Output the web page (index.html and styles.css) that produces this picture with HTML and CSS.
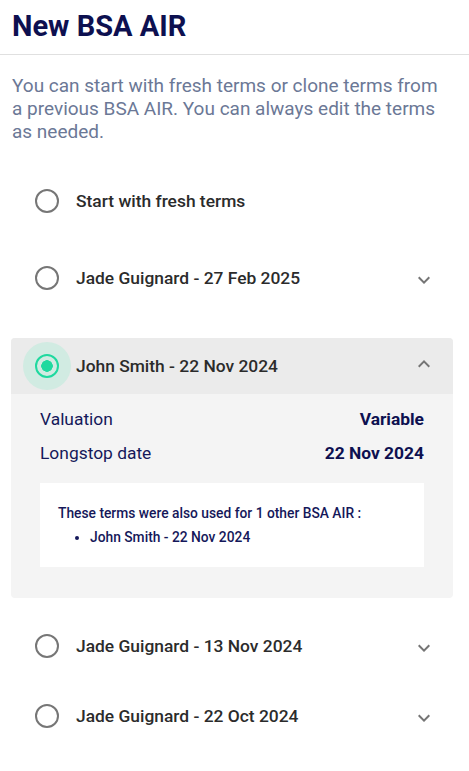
FILE: index.html
```html
<!DOCTYPE html>
<html lang="en">
<head>
    <meta charset="UTF-8">
    <meta name="viewport" content="width=device-width, initial-scale=1.0">
    <title>New BSA AIR</title>
    <link rel="stylesheet" href="styles.css">
</head>
<body>
    <!-- Header -->
    <header class="page-header">
        <h1>New BSA AIR</h1>
    </header>

    <p class="intro">You can start with fresh terms or clone terms from a previous BSA AIR. You can always edit the terms as needed.</p>

    <!-- Term options -->
    <div class="options">
        <div class="option option-first">
            <span class="radio"><span class="radio-ring"></span></span>
            <span class="option-label">Start with fresh terms</span>
        </div>

        <div class="option option-second">
            <span class="radio"><span class="radio-ring"></span></span>
            <span class="option-label">Jade Guignard - 27 Feb 2025</span>
            <svg class="chevron" viewBox="0 0 24 24"><path d="M16.59 8.59 12 13.17 7.41 8.59 6 10l6 6 6-6z"/></svg>
        </div>

        <div class="option-card">
            <div class="option option-open">
                <span class="radio checked"><span class="radio-ring"></span></span>
                <span class="option-label">John Smith - 22 Nov 2024</span>
                <svg class="chevron" viewBox="0 0 24 24"><path d="M12 8l-6 6 1.41 1.41L12 10.83l4.59 4.58L18 14z"/></svg>
            </div>
            <div class="details">
                <div class="detail-row">
                    <span>Valuation</span>
                    <strong>Variable</strong>
                </div>
                <div class="detail-row">
                    <span>Longstop date</span>
                    <strong>22 Nov 2024</strong>
                </div>
                <div class="note">
                    <p>These terms were also used for 1 other BSA AIR :</p>
                    <ul>
                        <li>John Smith - 22 Nov 2024</li>
                    </ul>
                </div>
            </div>
        </div>

        <div class="option option-after">
            <span class="radio"><span class="radio-ring"></span></span>
            <span class="option-label">Jade Guignard - 13 Nov 2024</span>
            <svg class="chevron" viewBox="0 0 24 24"><path d="M16.59 8.59 12 13.17 7.41 8.59 6 10l6 6 6-6z"/></svg>
        </div>

        <div class="option option-last">
            <span class="radio"><span class="radio-ring"></span></span>
            <span class="option-label">Jade Guignard - 22 Oct 2024</span>
            <svg class="chevron" viewBox="0 0 24 24"><path d="M16.59 8.59 12 13.17 7.41 8.59 6 10l6 6 6-6z"/></svg>
        </div>
    </div>
</body>
</html>
```

FILE: styles.css
```css
body {
    margin: 0;
    font-family: Roboto, 'Liberation Sans', sans-serif;
    background-color: #ffffff;
    color: #2b2b2b;
}

.page-header {
    border-bottom: 1px solid #e0e0e0;
    padding: 8px 12px 10px;
}

.page-header h1 {
    margin: 0;
    font-size: 29px;
    line-height: 36px;
    font-weight: 700;
    color: #0d1050;
}

.intro {
    margin: 19px 20px 0 12px;
    font-size: 19px;
    line-height: 23px;
    color: #6b7896;
}

.options {
    margin: 30px 16px 0 11px;
}

.option {
    display: flex;
    align-items: center;
    height: 56px;
    padding: 0 17px 0 12px;
}

.option-second {
    margin-top: 21px;
}

.option-card {
    margin-top: 32px;
    background: #f4f4f4;
    border-radius: 4px;
    overflow: hidden;
}

.option-open {
    background: #ebebeb;
}

.option-after {
    margin-top: 20px;
}

.option-last {
    margin-top: 14px;
}

.radio {
    display: flex;
    align-items: center;
    justify-content: center;
    width: 48px;
    height: 48px;
    border-radius: 50%;
    flex-shrink: 0;
}

.radio-ring {
    box-sizing: border-box;
    width: 24px;
    height: 24px;
    border: 2px solid #767676;
    border-radius: 50%;
}

.radio.checked {
    background: #d1ebe2;
}

.radio.checked .radio-ring {
    border-color: #1fd99f;
    background: radial-gradient(circle, #1fd99f 0 5.5px, transparent 6px);
}

.option-label {
    flex: 1;
    margin-left: 5px;
    font-size: 17.4px;
    font-weight: 500;
    color: #2b2b2b;
}

.chevron {
    width: 24px;
    height: 24px;
    fill: #757575;
    margin-top: 4px;
}

.option-open .chevron {
    margin-top: -4px;
}

.details {
    padding: 8px 29px 31px;
    color: #15185a;
}

.detail-row {
    display: flex;
    justify-content: space-between;
    align-items: center;
    height: 34px;
    font-size: 17.4px;
}

.detail-row strong {
    font-weight: 700;
    color: #0d1050;
}

.note {
    margin-top: 13px;
    background: #ffffff;
    padding: 21px 18px 21px;
    font-size: 13.8px;
    font-weight: 500;
    color: #15185a;
}

.note p {
    margin: 0;
    line-height: 18px;
}

.note ul {
    margin: 6px 0 0;
    padding-left: 32px;
}

.note li {
    line-height: 18px;
}
```
